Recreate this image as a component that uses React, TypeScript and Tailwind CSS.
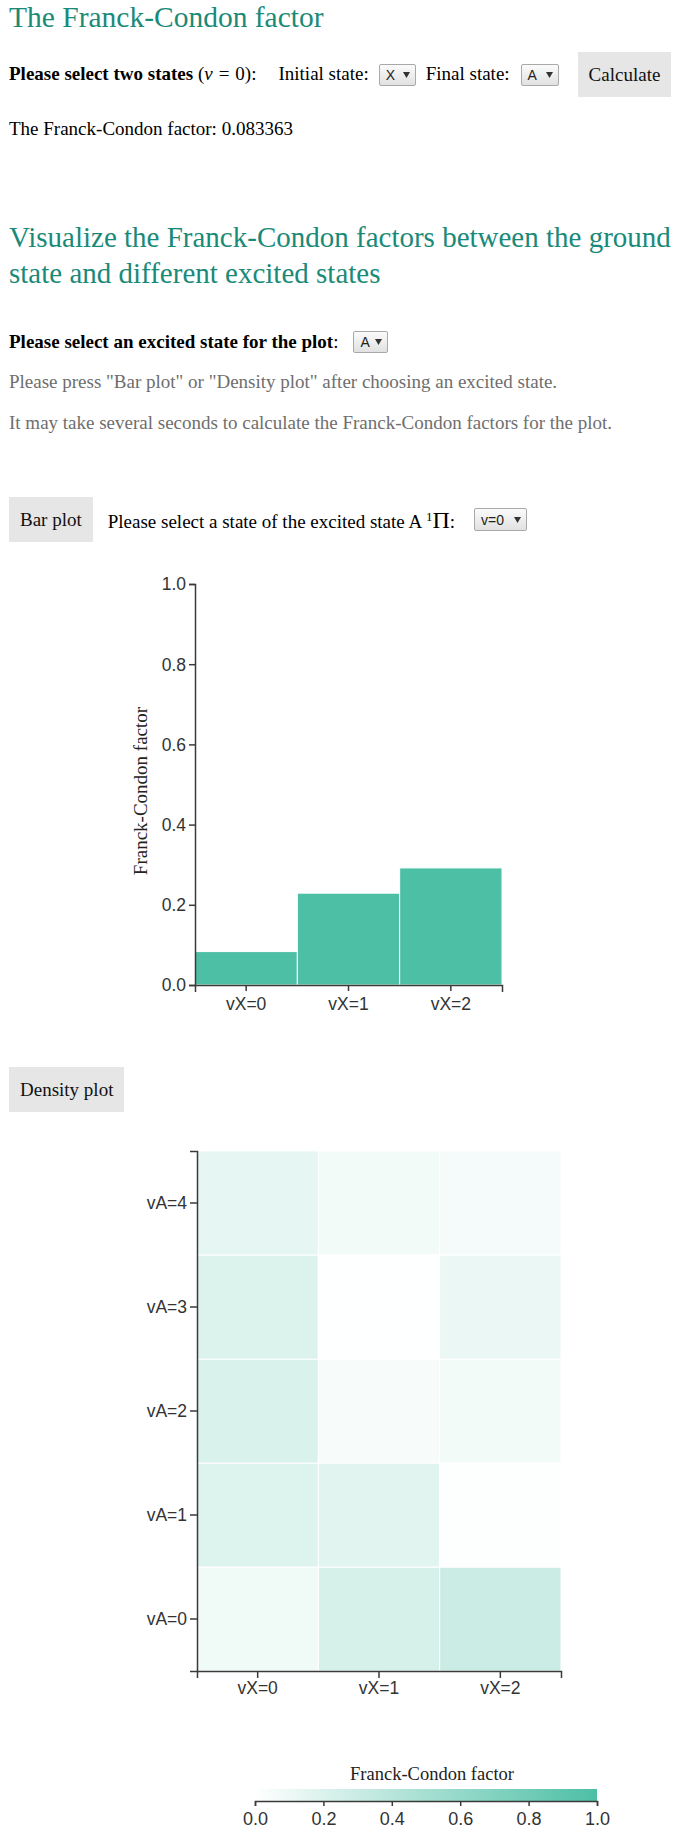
const TEAL = '#4dbfa5';
const AXIS = '#3a3a3a';
const SANS = 'Liberation Sans, Arial, sans-serif';
const SERIF = 'Liberation Serif, Times New Roman, serif';

const barData = [
  { label: 'vX=0', value: 0.083363 },
  { label: 'vX=1', value: 0.229 },
  { label: 'vX=2', value: 0.292 },
];

// rows from vA=0 (bottom) to vA=4 (top), columns vX=0..2
const density = [
  [0.083363, 0.229, 0.292],
  [0.19, 0.17, 0.01],
  [0.21, 0.045, 0.07],
  [0.197, 0.005, 0.12],
  [0.14, 0.07, 0.055],
];

function mix(t: number) {
  const r = Math.round(255 + (77 - 255) * t);
  const g = Math.round(255 + (191 - 255) * t);
  const b = Math.round(255 + (165 - 255) * t);
  return `rgb(${r},${g},${b})`;
}

function Dropdown({ label, className }: { label: string; className: string }) {
  return (
    <span
      className={`inline-flex h-[22px] items-center justify-between rounded-[2px] border border-[#a9a9a9] bg-linear-to-b from-[#fbfbfb] to-[#e1e1e1] pl-[6px] pr-[5px] font-['Liberation_Sans'] text-[14px] leading-none text-[#222] ${className}`}
    >
      {label}
      <svg width="7" height="6" viewBox="0 0 7 6">
        <path d="M0 0H7L3.5 6Z" fill="#333" />
      </svg>
    </span>
  );
}

function GrayButton({ children }: { children: React.ReactNode }) {
  return (
    <button className="h-[45px] shrink-0 bg-[#e6e6e6] px-[11px] text-[19px] leading-none text-[#111]">
      {children}
    </button>
  );
}

function BarChart() {
  const W = 307;
  const H = 401;
  const bw = W / barData.length;
  const ticks = [0, 0.2, 0.4, 0.6, 0.8, 1.0];
  return (
    <svg width="676" height="488" className="block">
      <text
        transform="translate(131,249) rotate(-90)"
        textAnchor="middle"
        dy="0.35em"
        fontFamily={SERIF}
        fontSize="19"
        fill="#222"
      >
        Franck-Condon factor
      </text>
      <g transform="translate(186,42)">
        {barData.map((d, i) => (
          <rect
            key={d.label}
            x={i * bw}
            y={H - d.value * H}
            width={bw}
            height={d.value * H}
            fill={TEAL}
            stroke="#fff"
            strokeWidth="1"
          />
        ))}
        <path d={`M-6,0.5H0.5V${H + 0.5}H-6`} fill="none" stroke={AXIS} strokeWidth="1.5" />
        {ticks.map((t) => (
          <g key={t} transform={`translate(0,${H - t * H + 0.5})`}>
            <line x1="-6" x2="0" stroke={AXIS} strokeWidth="1.5" />
            <text x="-9" dy="0.34em" textAnchor="end" fontFamily={SANS} fontSize="17.5" fill="#333">
              {t.toFixed(1)}
            </text>
          </g>
        ))}
        <path d={`M0.5,${H + 7}V${H + 0.5}H${W + 0.5}V${H + 7}`} fill="none" stroke={AXIS} strokeWidth="1.5" />
        {barData.map((d, i) => (
          <g key={d.label} transform={`translate(${i * bw + bw / 2},${H})`}>
            <line y1="0" y2="6" stroke={AXIS} strokeWidth="1.5" />
            <text y="19" dy="0.35em" textAnchor="middle" fontFamily={SANS} fontSize="17.5" fill="#333">
              {d.label}
            </text>
          </g>
        ))}
      </g>
    </svg>
  );
}

function DensityChart() {
  const W = 364;
  const H = 520;
  const cw = W / 3;
  const rh = H / 5;
  const legendTicks = [0, 0.2, 0.4, 0.6, 0.8, 1.0];
  const LX = 246;
  const LW = 342;
  return (
    <svg width="676" height="717" className="block">
      <defs>
        <linearGradient id="fcf" x1="0" x2="1" y1="0" y2="0">
          <stop offset="0" stopColor="#ffffff" />
          <stop offset="1" stopColor={TEAL} />
        </linearGradient>
      </defs>
      <g transform="translate(188,39)">
        {density.map((row, r) =>
          row.map((v, c) => (
            <rect
              key={`${r}-${c}`}
              x={c * cw}
              y={H - (r + 1) * rh}
              width={cw}
              height={rh}
              fill={mix(v)}
              stroke="#fff"
              strokeWidth="1"
            />
          ))
        )}
        <path d={`M-7,0.5H0.5V${H + 0.5}H-7`} fill="none" stroke={AXIS} strokeWidth="1.5" />
        {density.map((_, r) => (
          <g key={r} transform={`translate(0,${H - r * rh - rh / 2})`}>
            <line x1="-7" x2="0" stroke={AXIS} strokeWidth="1.5" />
            <text x="-10" dy="0.34em" textAnchor="end" fontFamily={SANS} fontSize="17.5" fill="#333">
              {`vA=${r}`}
            </text>
          </g>
        ))}
        <path d={`M0.5,${H + 7}V${H + 0.5}H${W + 0.5}V${H + 7}`} fill="none" stroke={AXIS} strokeWidth="1.5" />
        {[0, 1, 2].map((c) => (
          <g key={c} transform={`translate(${c * cw + cw / 2},${H})`}>
            <line y1="0" y2="7" stroke={AXIS} strokeWidth="1.5" />
            <text y="17" dy="0.35em" textAnchor="middle" fontFamily={SANS} fontSize="17.5" fill="#333">
              {`vX=${c}`}
            </text>
          </g>
        ))}
      </g>

      {/* colour legend */}
      <text x="423" y="662" dy="0.35em" textAnchor="middle" fontFamily={SERIF} fontSize="18.5" fill="#222">
        Franck-Condon factor
      </text>
      <rect x={LX} y="677" width={LW} height="12" fill="url(#fcf)" />
      <path d={`M${LX + 0.5},694V689.5H${LX + LW + 0.5}V694`} fill="none" stroke={AXIS} strokeWidth="1.5" />
      {legendTicks.map((t) => (
        <g key={t} transform={`translate(${LX + t * LW + 0.5},689)`}>
          <line y1="0" y2="5" stroke={AXIS} strokeWidth="1.5" />
          <text y="18" dy="0.35em" textAnchor="middle" fontFamily={SANS} fontSize="18" fill="#333">
            {t.toFixed(1)}
          </text>
        </g>
      ))}
    </svg>
  );
}

export default function App() {
  return (
    <div className="min-h-screen bg-white pl-[9px] font-['Liberation_Serif'] text-[19px] text-black">
      {/* Single pair */}
      <h1 className="text-[29.5px] leading-[34px] text-[#1a8a78]">The Franck-Condon factor</h1>

      <div className="mt-[18px] flex h-[45px] items-center">
        <span>
          <b>Please select two states</b> (<i>ν</i>
          <span className="mx-[6px]">=</span>0):
        </span>
        <span className="ml-[22px]">Initial state:</span>
        <Dropdown label="X" className="ml-[10px] w-[37px]" />
        <span className="ml-[10px]">Final state:</span>
        <Dropdown label="A" className="ml-[11px] w-[38px]" />
        <span className="ml-[19px]">
          <GrayButton>Calculate</GrayButton>
        </span>
      </div>

      <p className="mt-[20px] leading-[24px]">The Franck-Condon factor: 0.083363</p>

      {/* Plots */}
      <h2 className="mt-[78px] pr-[4px] text-[29px] leading-[36px] text-[#1a8a78]">
        Visualize the Franck-Condon factors between the ground state and different excited states
      </h2>

      <div className="mt-[39px] flex h-[24px] items-center">
        <b>Please select an excited state for the plot</b>:
        <Dropdown label="A" className="ml-[15px] w-[35px]" />
      </div>
      <p className="mt-[16px] leading-[24px] text-[#6e6e6e]">
        Please press "Bar plot" or "Density plot" after choosing an excited state.
      </p>
      <p className="mt-[17px] leading-[24px] text-[#6e6e6e]">
        It may take several seconds to calculate the Franck-Condon factors for the plot.
      </p>

      <div className="mt-[62px] flex h-[45px] items-center">
        <GrayButton>Bar plot</GrayButton>
        <span className="ml-[15px]">
          Please select a state of the excited state A <sup className="text-[13px]">1</sup>
          <span className="text-[24px]">Π</span>:
        </span>
        <Dropdown label="v=0" className="ml-[19px] h-[23px] w-[53px]" />
      </div>

      <BarChart />

      <div className="mt-[37px] flex h-[45px] items-center">
        <GrayButton>Density plot</GrayButton>
      </div>

      <DensityChart />
    </div>
  );
}
